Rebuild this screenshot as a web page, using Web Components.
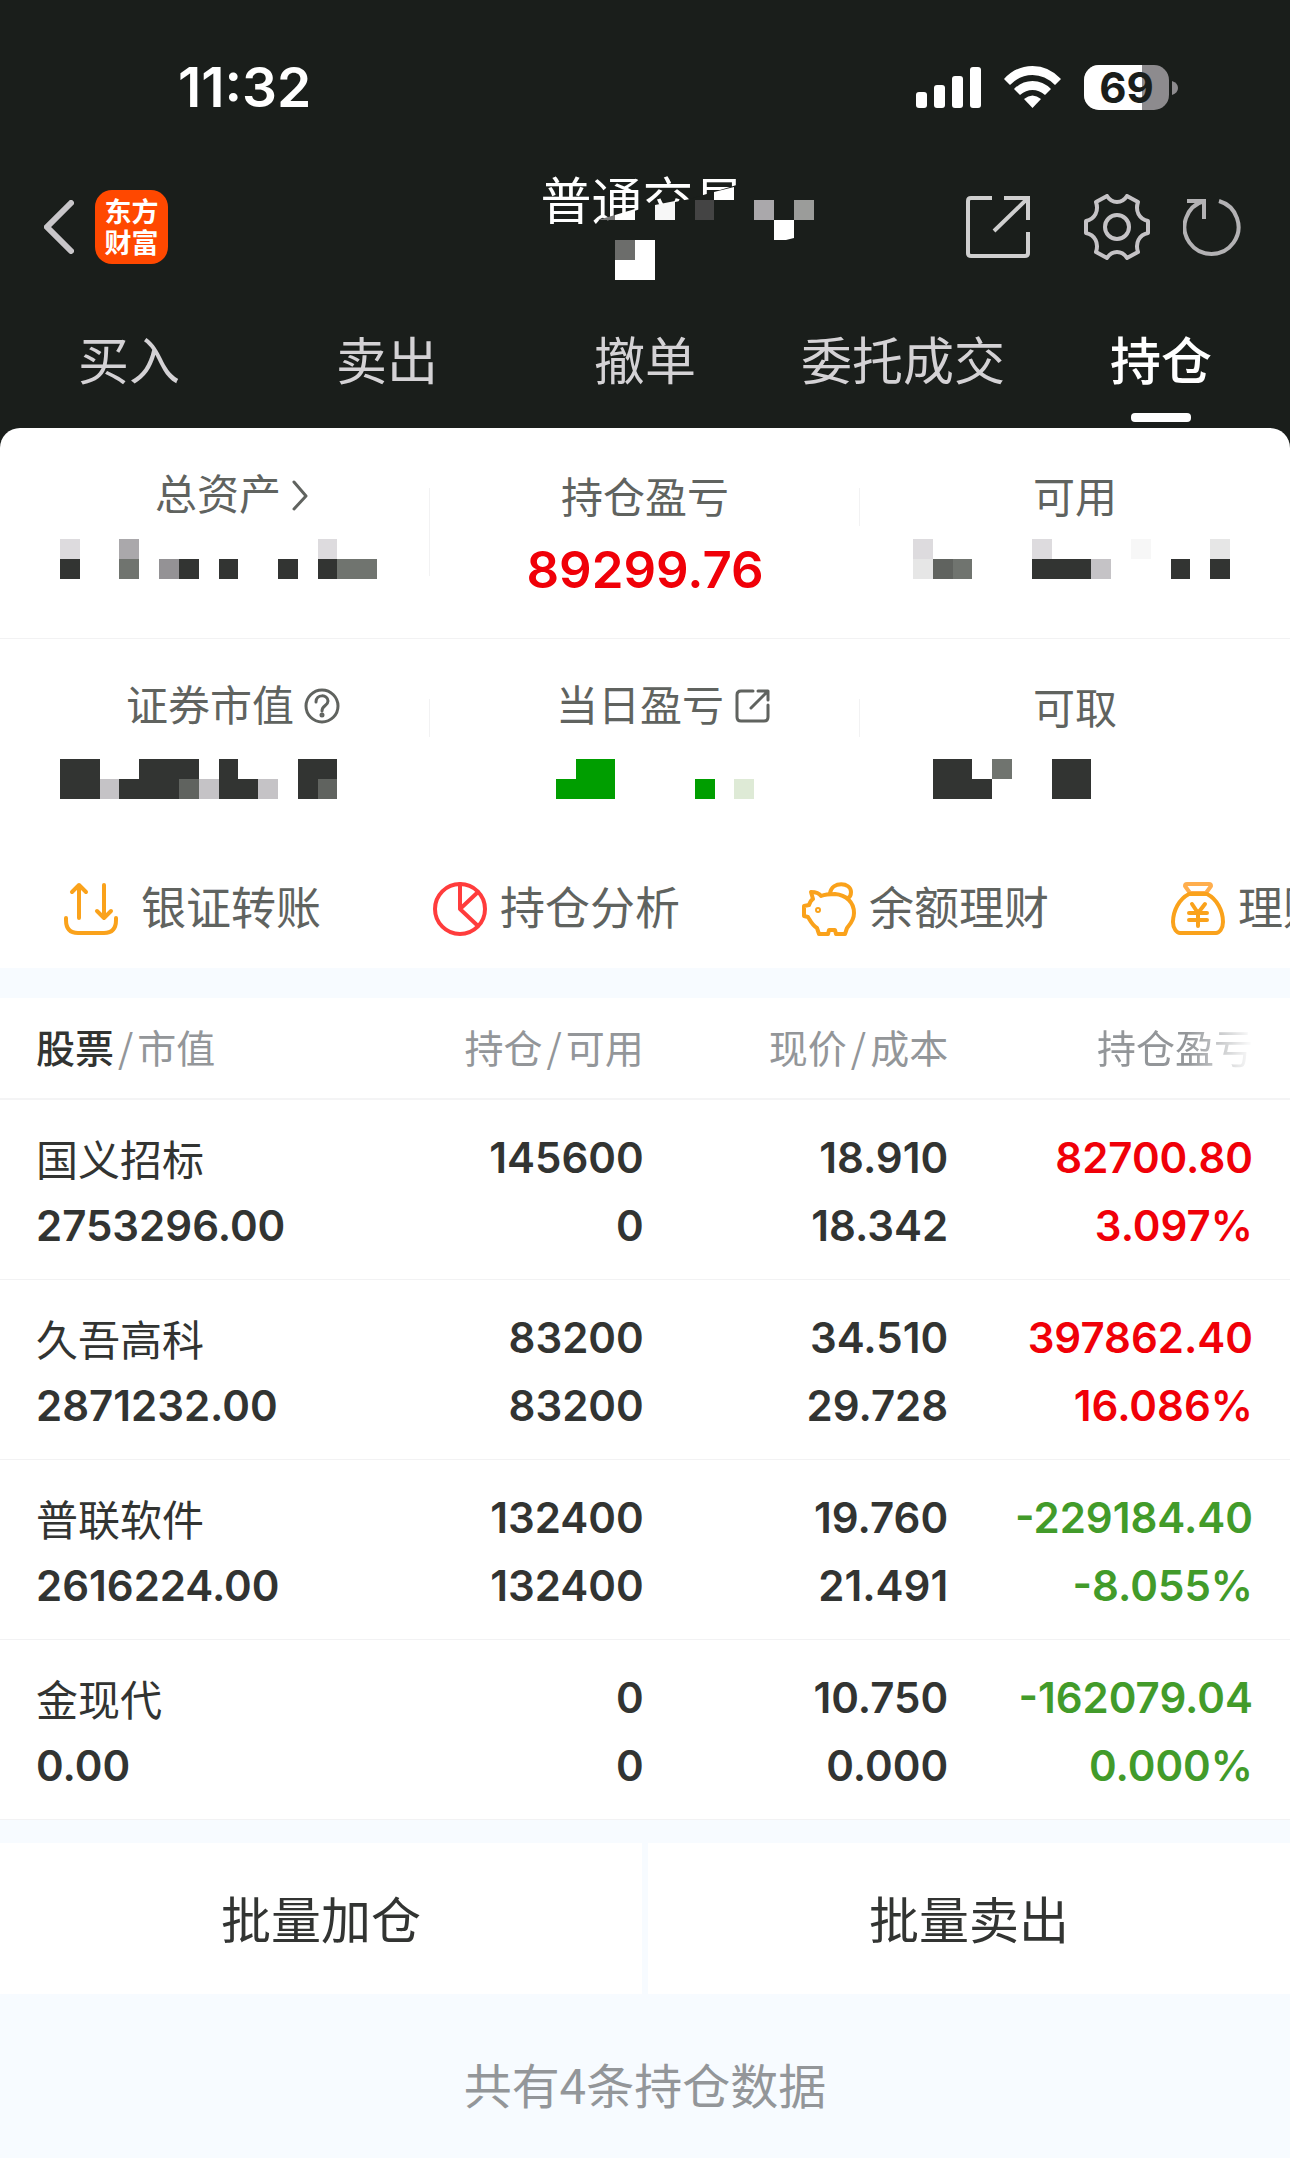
<!DOCTYPE html>
<html lang="zh-CN">
<head>
<meta charset="UTF-8">
<meta name="viewport" content="width=device-width, initial-scale=1.0">
<title>持仓</title>
<style>
  body {
    margin: 0;
    background: #f7fbff;
    font-family: Inter, "Noto Sans CJK SC", sans-serif;
    color: #323432;
  }
</style>
</head>
<body>
<trade-app></trade-app>

<script>
class StatusBar extends HTMLElement {
  connectedCallback() {
    this.attachShadow({ mode: 'open' });
    this.shadowRoot.innerHTML = `
      <style>
        :host {
          display: flex;
          align-items: center;
          justify-content: space-between;
          box-sizing: border-box;
          height: 150px;
          padding: 24px 112px 0 178px;
          color: #fff;
        }
        .time { font-size: 55px; font-weight: 600; line-height: 64px; }
        .icons { display: flex; align-items: center; gap: 23px; }
        .battery { display: grid; align-items: center; }
        .battery > * { grid-area: 1 / 1; }
        .level {
          width: 85px;
          text-align: center;
          font-size: 42px;
          font-weight: 700;
          line-height: 45px;
          color: #1a1e1b;
        }
        svg { display: block; }
      </style>
      <span class="time">11:32</span>
      <div class="icons">
        <svg width="65" height="41" viewBox="0 0 65 41" fill="#fff">
          <rect x="0" y="25" width="11" height="16" rx="3"/>
          <rect x="18" y="18" width="11" height="23" rx="3"/>
          <rect x="36" y="9" width="11" height="32" rx="3"/>
          <rect x="54" y="0" width="11" height="41" rx="3"/>
        </svg>
        <svg width="57" height="42" viewBox="0 0 57 42" fill="#fff">
          <path d="M0 13Q12 0 28.500 0T57 13L51 19Q41 9 28.500 9T6 19Z"/>
          <path d="M10 23Q18 15 28.500 15T47 23L41 29Q35 24 28.500 24T16 29Z"/>
          <path d="M20 33Q28.500 26 37 33L28.500 42Z"/>
        </svg>
        <div class="battery">
          <svg width="94" height="45" viewBox="0 0 94 45">
            <defs><clipPath id="shell"><rect width="85" height="45" rx="15"/></clipPath></defs>
            <g clip-path="url(#shell)">
              <rect width="85" height="45" fill="#8d8b8e"/>
              <rect width="58" height="45" fill="#fff"/>
            </g>
            <path d="M88 16Q94 18 94 23T88 30Z" fill="#8d8b8e"/>
          </svg>
          <span class="level">69</span>
        </div>
      </div>
    `;
  }
}
customElements.define('status-bar', StatusBar);

class NavHeader extends HTMLElement {
  connectedCallback() {
    this.attachShadow({ mode: 'open' });
    this.shadowRoot.innerHTML = `
      <style>
        :host {
          display: grid;
          grid-template-columns: 1fr auto 1fr;
          align-items: center;
          height: 154px;
          padding: 0 49px 0 44px;
          color: #fff;
        }
        button {
          display: block;
          margin: 0;
          padding: 0;
          border: 0;
          background: none;
          cursor: pointer;
        }
        svg { display: block; }
        .left { display: flex; align-items: center; gap: 21px; }
        .logo {
          box-sizing: border-box;
          width: 73px;
          height: 74px;
          padding: 7px 0 5px;
          border-radius: 17px;
          background: #ff4800;
          font-size: 27px;
          font-weight: 700;
          line-height: 31px;
          text-align: center;
        }
        .logo span { display: block; }
        .title { position: relative; align-self: start; padding-top: 22px; }
        h1 { margin: 0; font-size: 51px; font-weight: 400; line-height: 60px; }
        /* privacy blocks lie over the account name */
        .title svg { position: absolute; top: 10px; left: -20px; }
        .right { display: flex; align-items: center; justify-content: flex-end; }
        .right button + button { margin-left: 33px; }
        .right .share { margin-right: 21px; }
      </style>
      <div class="left">
        <button aria-label="返回">
          <svg width="30" height="54" viewBox="0 0 30 54" fill="none" stroke="#c8c6c9" stroke-width="6" stroke-linecap="round"><path d="M27 3L3 27L27 51"/></svg>
        </button>
        <div class="logo"><span>东方</span><span>财富</span></div>
      </div>
      <div class="title">
        <h1>普通交易</h1>
        <svg width="320" height="130" viewBox="520 160 320 130">
          <path d="M592 226L640 209L690 199L740 184H760V250H592Z" fill="#1a1e1b"/>
          <path d="M598 220L615 215V220Z" fill="#777"/>
          <path d="M615 215L635 209V220H615Z" fill="#fff"/>
          <path d="M655 205L675 201V220H655Z" fill="#f7f7f7"/>
          <path d="M695 200H714V220H695Z" fill="#444"/>
          <path d="M714 192L734 187V200H714Z" fill="#fff"/>
          <path d="M754 200H774V220H754Z" fill="#aaa8ab"/>
          <path d="M774 220H794V238L786 240H774Z" fill="#fff"/>
          <path d="M794 200H814V220H794Z" fill="#9b9c9a"/>
          <path d="M615 240H655V280H615Z" fill="#fff"/>
          <path d="M615 240H635V260H615Z" fill="#6c6d6b"/>
        </svg>
      </div>
      <div class="right">
        <button class="share" aria-label="分享">
          <svg width="64" height="64" viewBox="0 0 64 64" fill="none" stroke="#cfcfcf" stroke-width="4">
            <path d="M26 3H5Q2 3 2 6V58Q2 61 5 61H59Q62 61 62 58V37"/>
            <path d="M38 3H62V25M61 4L28 36"/>
          </svg>
        </button>
        <button aria-label="设置">
          <svg width="66" height="66" viewBox="0 0 66 66" fill="none" stroke="#c5c3c6" stroke-width="4" stroke-linejoin="round">
            <path d="M23 2C28 10 38 10 43 2L54 8C51 17 55 25 64 27V39C55 41 51 49 54 58L43 64C38 56 28 56 23 64L12 58C15 49 11 41 2 39V27C11 25 15 17 12 8Z"/>
            <circle cx="33" cy="33" r="12"/>
          </svg>
        </button>
        <button aria-label="刷新">
          <svg width="58" height="60" viewBox="0 0 58 60" fill="none" stroke="#b3b2b4" stroke-width="4">
            <path d="M36 4A27 27 0 1 1 21 4M4 4H21V22"/>
          </svg>
        </button>
      </div>
    `;
  }
}
customElements.define('nav-header', NavHeader);

class TradeTabs extends HTMLElement {
  connectedCallback() {
    const tabs = ['买入', '卖出', '撤单', '委托成交', '持仓'];
    const active = this.getAttribute('active');
    this.attachShadow({ mode: 'open' });
    this.shadowRoot.innerHTML = `
      <style>
        :host { display: block; }
        nav { display: grid; grid-template-columns: repeat(5, 1fr); height: 124px; }
        button {
          display: flex;
          flex-direction: column;
          align-items: center;
          gap: 23px;
          margin: 0;
          padding: 30px 0 0;
          border: 0;
          background: none;
          font: inherit;
          font-size: 51px;
          line-height: 56px;
          color: #d4d2d5;
          white-space: nowrap;
          cursor: pointer;
        }
        .active { font-weight: 500; color: #fff; }
        .active::after {
          content: '';
          width: 60px;
          height: 9px;
          border-radius: 4px;
          background: #fff;
        }
      </style>
      <nav>
        ${tabs.map(t => `<button class="${t === active ? 'active' : ''}"><span>${t}</span></button>`).join('')}
      </nav>
    `;
  }
}
customElements.define('trade-tabs', TradeTabs);

// Hidden amount: two rows of cells, one letter for each cell's colour.
const COLOURS = {
  d: '#323432', m: '#60635f', g: '#70746f', s: '#949295', a: '#aaa8ab',
  l: '#c5c3c6', p: '#dddbde', e: '#e6e6e6', w: '#f7f7f7', G: '#009e00', t: '#deead6'
};
class MosaicStrip extends HTMLElement {
  connectedCallback() {
    const start = Number(this.getAttribute('start'));
    const edge = n => Math.round(start + n * 317 / 16);
    const cells = [this.getAttribute('top'), this.getAttribute('bottom')].map((row, y) =>
      [...row].map((c, x) => COLOURS[c]
        ? `<rect x="${edge(x)}" y="${y * 20}" width="${edge(x + 1) - edge(x)}" height="20" fill="${COLOURS[c]}"/>`
        : '').join('')).join('');
    this.attachShadow({ mode: 'open' });
    this.shadowRoot.innerHTML = `
      <style>
        :host { display: block; }
        svg { display: block; width: 100%; height: 40px; }
      </style>
      <svg viewBox="0 0 430 40" shape-rendering="crispEdges">${cells}</svg>
    `;
  }
}
customElements.define('mosaic-strip', MosaicStrip);

class AssetStat extends HTMLElement {
  connectedCallback() {
    const icons = {
      more: '<svg width="20" height="36" viewBox="0 0 20 36"><path d="M3 5L15 19L3 32"/></svg>',
      help: '<svg width="36" height="36" viewBox="0 0 36 36"><circle cx="18" cy="18" r="16"/><path d="M12 14C12 6 24 6 24 13C24 18 18 17 18 23"/><circle cx="18" cy="27" r="1" fill="#60635f"/></svg>',
      open: '<svg width="36" height="36" viewBox="0 0 36 36"><path d="M19 3H7Q3 3 3 7V29Q3 33 7 33H30Q34 33 34 29V17M24 3H34V12M33 4L17 20"/></svg>'
    };
    const icon = icons[this.getAttribute('icon')] || '';
    const label = this.getAttribute('label');
    this.attachShadow({ mode: 'open' });
    this.shadowRoot.innerHTML = `
      <style>
        :host { display: block; height: 210px; }
        .label {
          display: flex;
          align-items: flex-end;
          justify-content: center;
          box-sizing: border-box;
          width: 100%;
          height: 111px;
          margin: 0;
          padding: 0 0 18px;
          border: 0;
          background: none;
          font: inherit;
          font-size: 42px;
          line-height: 46px;
          color: #60635f;
        }
        button.label { gap: 10px; padding: 0 0 21px 36px; cursor: pointer; }
        svg {
          padding-bottom: 5px;
          fill: none;
          stroke: #60635f;
          stroke-width: 3;
          stroke-linecap: round;
          stroke-linejoin: round;
        }
        .value {
          padding-top: var(--value-space, 0);
          text-align: center;
          font-size: 51px;
          font-weight: 600;
          line-height: 62px;
          color: #f00008;
        }
      </style>
      ${icon ? `<button class="label">${label}${icon}</button>` : `<div class="label">${label}</div>`}
      <div class="value"><slot></slot></div>
    `;
  }
}
customElements.define('asset-stat', AssetStat);

class AssetSummary extends HTMLElement {
  connectedCallback() {
    this.attachShadow({ mode: 'open' });
    this.shadowRoot.innerHTML = `
      <style>
        :host { display: block; background: #fff; border-radius: 20px 20px 0 0; }
        .row { display: grid; grid-template-columns: repeat(3, 1fr); }
        .row + .row { border-top: 1px solid #f2f2f3; --value-space: 9px; }
        .short, .tall {
          background: linear-gradient(#f2f2f3, #f2f2f3) no-repeat right 60px / 1px 38px;
        }
        .tall { background-size: 1px 88px; }
      </style>
      <div class="row">
        <asset-stat class="tall" label="总资产" icon="more">
          <mosaic-strip start="60" top="p..a.........p.." bottom="d..g.sd.d..d.dgg"></mosaic-strip>
        </asset-stat>
        <asset-stat class="short" label="持仓盈亏">89299.76</asset-stat>
        <asset-stat label="可用">
          <mosaic-strip start="53" top="p.....p....w...e" bottom="emg...dddl...d.d"></mosaic-strip>
        </asset-stat>
      </div>
      <div class="row">
        <asset-stat class="short" label="证券市值" icon="help">
          <mosaic-strip start="60" top="dd..ddd.d...dd.." bottom="ddldddmlddl.dm.."></mosaic-strip>
        </asset-stat>
        <asset-stat class="short" label="当日盈亏" icon="open">
          <mosaic-strip start="126" top=".GG......." bottom="GGG....G.t"></mosaic-strip>
        </asset-stat>
        <asset-stat label="可取">
          <mosaic-strip start="53" top=".dd.g..dd......." bottom=".ddd...dd......."></mosaic-strip>
        </asset-stat>
      </div>
    `;
  }
}
customElements.define('asset-summary', AssetSummary);

class QuickLinks extends HTMLElement {
  connectedCallback() {
    this.attachShadow({ mode: 'open' });
    this.shadowRoot.innerHTML = `
      <style>
        :host {
          display: flex;
          overflow: hidden;
          height: 119px;
          padding-left: 64px;
          background: #fff;
        }
        a {
          display: flex;
          flex: none;
          align-items: center;
          gap: 13px;
          width: 369px;
          height: 119px;
          font-size: 45px;
          line-height: 56px;
          color: #60635f;
          text-decoration: none;
          white-space: nowrap;
        }
        a:first-of-type { gap: 23px; }
        svg { fill: none; stroke: #faa21b; stroke-width: 4; stroke-linecap: round; stroke-linejoin: round; }
      </style>
      <a href="#transfer">
        <svg width="54" height="54" viewBox="0 0 54 54"><path d="M15 36V3M8 10L15 3L22 10M40 3V36M33 29L40 36L47 29M2 36V38Q2 51 14 51H40Q52 51 52 38V36"/></svg>
        银证转账
      </a>
      <a href="#analysis">
        <svg width="54" height="54" viewBox="0 0 54 54" style="stroke:#ff3c3c"><circle cx="27" cy="27" r="25"/><path d="M27 2V27L45 10M27 27L45 44"/></svg>
        持仓分析
      </a>
      <a href="#balance">
        <svg width="54" height="54" viewBox="0 0 54 54"><path d="M9 10C13 10 17 11 19 14C24 12 28 12 33 12C44 13 52 20 52 31C52 39 47 43 45 46L43 52H34L33 48H27L26 52H17L15 46C10 43 8 38 6 35L2 34V24L7 23C8 20 9 18 11 17Z"/><path d="M28 11C30 -1 49 0 49 10C49 13 48 15 46 16"/><circle cx="16" cy="28" r="1"/></svg>
        余额理财
      </a>
      <a href="#wealth">
        <svg width="54" height="54" viewBox="0 0 54 54"><path d="M19 11L14 4Q14 2 16 2H38Q40 2 40 4L35 11Z" stroke="#ffae4d"/><path d="M18 12H36C46 17 52 29 52 40C52 47 48 51 45 51H9C6 51 2 47 2 40C2 29 8 17 18 12ZM21 22L27 31L34 22M27 31V44M18 31H36M18 38H36"/></svg>
        理财
      </a>
    `;
  }
}
customElements.define('quick-links', QuickLinks);

class HoldingsTable extends HTMLElement {
  connectedCallback() {
    const rows = [
      ['国义招标', '2753296.00', '145600', '0', '18.910', '18.342', '82700.80', '3.097%', 'up'],
      ['久吾高科', '2871232.00', '83200', '83200', '34.510', '29.728', '397862.40', '16.086%', 'up'],
      ['普联软件', '2616224.00', '132400', '132400', '19.760', '21.491', '-229184.40', '-8.055%', 'down'],
      ['金现代', '0.00', '0', '0', '10.750', '0.000', '-162079.04', '0.000%', 'down']
    ];
    this.attachShadow({ mode: 'open' });
    this.shadowRoot.innerHTML = `
      <style>
        :host { display: block; margin-top: 30px; background: #fff; }
        table { width: 100%; border-collapse: separate; border-spacing: 0; table-layout: fixed; }
        .mid { width: 23.6%; }
        .last { width: 26.5%; }
        th, td { padding: 0; text-align: right; }
        th:first-child, td:first-child { padding-left: 36px; text-align: left; }
        th:last-child, td:last-child { padding-right: 37px; }
        th {
          height: 96px;
          padding-bottom: 4px;
          border-bottom: 2px solid #f4f4f5;
          font-family: "Noto Sans CJK SC", sans-serif;
          font-size: 39px;
          font-weight: 400;
          line-height: 48px;
          color: #939699;
          white-space: nowrap;
        }
        th b { font-weight: 500; color: #323432; }
        th i { margin: 0 4px; font-style: normal; }
        .fade {
          display: inline-block;
          -webkit-mask-image: linear-gradient(90deg, #000 58%, transparent);
          mask-image: linear-gradient(90deg, #000 58%, transparent);
        }
        td {
          padding: 24px 0 19px;
          border-bottom: 1px solid #f2f2f3;
          font-size: 42px;
          font-weight: 600;
          line-height: 68px;
        }
        td span { display: block; height: 68px; }
        .name { font-family: "Noto Sans CJK SC", sans-serif; font-weight: 400; }
        .up { color: #f00008; }
        .down { color: #429b2a; }
      </style>
      <table>
        <colgroup><col><col class="mid"><col class="mid"><col class="last"></colgroup>
        <thead>
          <tr>
            <th><b>股票</b><i>/</i>市值</th>
            <th>持仓<i>/</i>可用</th>
            <th>现价<i>/</i>成本</th>
            <th><span class="fade">持仓盈亏</span></th>
          </tr>
        </thead>
        <tbody>
          ${rows.map(r => `
            <tr>
              <td><span class="name">${r[0]}</span><span>${r[1]}</span></td>
              <td><span>${r[2]}</span><span>${r[3]}</span></td>
              <td><span>${r[4]}</span><span>${r[5]}</span></td>
              <td class="${r[8]}"><span>${r[6]}</span><span>${r[7]}</span></td>
            </tr>`).join('')}
        </tbody>
      </table>
    `;
  }
}
customElements.define('holdings-table', HoldingsTable);

class BatchActions extends HTMLElement {
  connectedCallback() {
    this.attachShadow({ mode: 'open' });
    this.shadowRoot.innerHTML = `
      <style>
        :host { display: block; margin-top: 23px; }
        .buttons { display: grid; grid-template-columns: 1fr 1fr; gap: 6px; }
        button {
          height: 151px;
          margin: 0;
          padding: 4px 0 0;
          border: 0;
          background: #fff;
          font: inherit;
          font-size: 50px;
          line-height: 60px;
          color: #323432;
          cursor: pointer;
        }
        p {
          margin: 0;
          padding: 60px 0 44px;
          text-align: center;
          font-family: "Noto Sans CJK SC", sans-serif;
          font-size: 48px;
          line-height: 58px;
          color: #939699;
        }
      </style>
      <div class="buttons">
        <button>批量加仓</button>
        <button>批量卖出</button>
      </div>
      <p><slot></slot></p>
    `;
  }
}
customElements.define('batch-actions', BatchActions);

class TradeApp extends HTMLElement {
  connectedCallback() {
    this.attachShadow({ mode: 'open' });
    this.shadowRoot.innerHTML = `
      <style>
        :host { display: block; }
        header { background: #1a1e1b; }
      </style>
      <header>
        <status-bar></status-bar>
        <nav-header></nav-header>
        <trade-tabs active="持仓"></trade-tabs>
        <asset-summary></asset-summary>
      </header>
      <main>
        <quick-links></quick-links>
        <holdings-table></holdings-table>
        <batch-actions>共有4条持仓数据</batch-actions>
      </main>
    `;
  }
}
customElements.define('trade-app', TradeApp);
</script>
</body>
</html>
